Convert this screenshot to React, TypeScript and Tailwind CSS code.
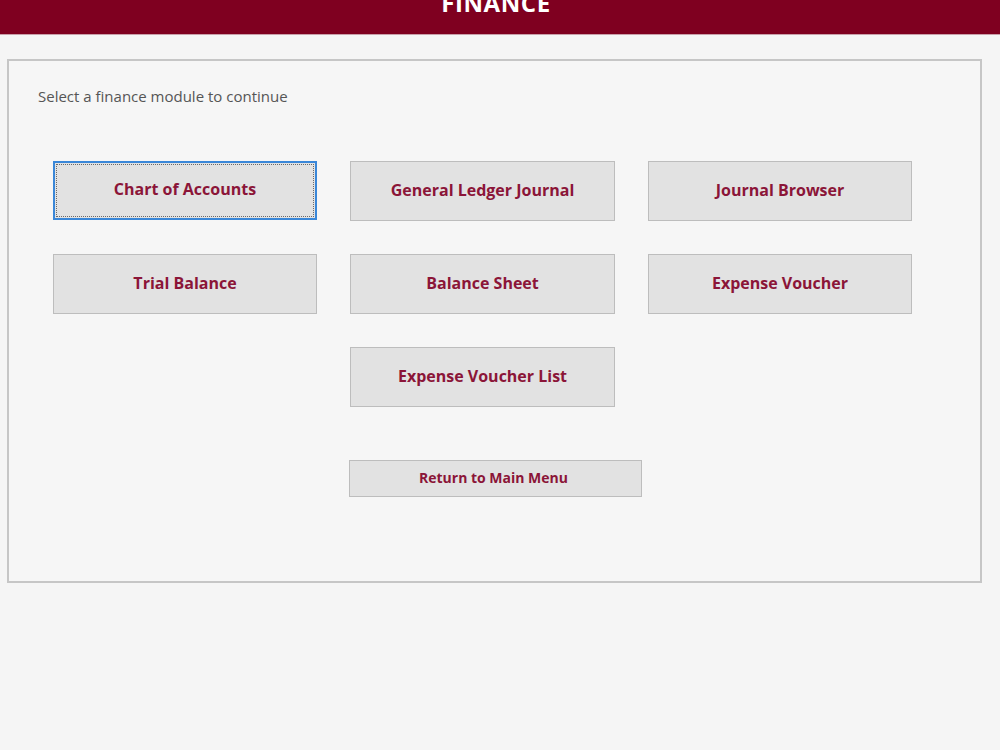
const modules = [
  "Chart of Accounts",
  "General Ledger Journal",
  "Journal Browser",
  "Trial Balance",
  "Balance Sheet",
  "Expense Voucher",
];

const font = { fontFamily: "'Open Sans', 'Noto Sans', sans-serif" };

export default function App() {
  return (
    <div className="w-[1000px] h-[750px] bg-[#f5f5f5] overflow-hidden" style={font}>
      {/* Title bar */}
      <div className="h-[35px] bg-[#7f0020] border-b border-[#c9a0aa] flex justify-center overflow-hidden">
        <h1 className="text-white font-bold text-[24px] leading-none -mt-[9px] tracking-wide pr-[8px]">FINANCE</h1>
      </div>

      {/* Panel */}
      <div className="mt-[24px] ml-[7px] w-[975px] h-[524px] border-2 border-[#c6c6c6] bg-[#f6f6f6] pt-[25px] pl-[29px]">
        <p className="text-[15px] leading-5 text-[#555555]">Select a finance module to continue</p>

        <div className="mt-[55px] ml-[15px] grid grid-cols-[264px_265px_264px] gap-x-[33px] gap-y-[33px]">
          {modules.map((name, i) => (
            <button
              key={name}
              className={
                i === 0
                  ? "h-[59px] bg-[#e2e2e2] border-2 border-[#3a87d8] outline-1 outline-dotted outline-[#6a6a6a] outline-offset-[-4px] text-[#8b1538] font-bold text-[16px] pb-[3px]"
                  : "h-[60px] bg-[#e2e2e2] border border-[#bdbdbd] text-[#8b1538] font-bold text-[16px] pb-[3px]"
              }
            >
              {name}
            </button>
          ))}
          <div />
          <button className="h-[60px] bg-[#e2e2e2] border border-[#bdbdbd] text-[#8b1538] font-bold text-[16px] pb-[3px]">
            Expense Voucher List
          </button>
        </div>

        <button className="mt-[53px] ml-[311px] w-[293px] h-[37px] bg-[#e2e2e2] border border-[#bdbdbd] text-[#8b1538] font-bold text-[14px] pr-[4px] pb-[2px]">
          Return to Main Menu
        </button>
      </div>
    </div>
  );
}
